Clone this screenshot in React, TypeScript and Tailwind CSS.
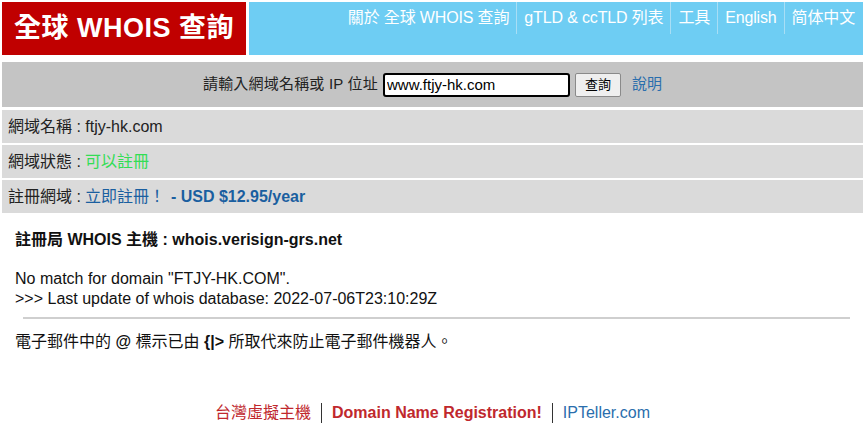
const FONT = { fontFamily: '"Liberation Sans", Arial, "Noto Sans CJK TC", sans-serif' };

const NAV = ["關於 全球 WHOIS 查詢", "gTLD & ccTLD 列表", "工具", "English", "简体中文"];

export default function App() {
  return (
    <div className="min-h-[430px] bg-white px-[2px] pt-[2px] text-[#222]" style={FONT}>
      <header className="flex h-[53px] gap-[3px]">
        <div className="flex w-[244px] items-center justify-center bg-[#c00000]">
          <span className="text-[27px] font-bold tracking-[0.5px] text-white">全球 WHOIS 查詢</span>
        </div>
        <nav className="flex flex-1 items-start justify-end bg-[#6ecdf3] pr-[1px]">
          {NAV.map((item, i) => (
            <span
              key={item}
              className={`flex h-[32px] items-center px-[7px] text-[16px] tracking-[-0.15px] text-white ${
                i > 0 ? "border-l border-[#a8def5]" : ""
              }`}
            >
              {item}
            </span>
          ))}
        </nav>
      </header>

      <form className="mt-[7px] flex h-[45px] items-center justify-center gap-[5px] bg-[#c4c4c4] text-[15px] text-[#222]">
        <label htmlFor="q" className="tracking-[0.2px]">請輸入網域名稱或 IP 位址</label>
        <input
          id="q"
          defaultValue="www.ftjy-hk.com"
          className="h-[24px] w-[187px] rounded-[3px] border-2 border-black bg-white px-[2px] text-[15px] text-black outline-none"
          style={FONT}
        />
        <button
          type="button"
          className="h-[24px] w-[46px] rounded-[2px] border border-[#8a8a8a] bg-[#efefef] text-[13px] text-black"
        >
          查詢
        </button>
        <a href="#" className="ml-[6px] text-[#2a6ead]">說明</a>
      </form>

      <div className="mt-[3px] flex flex-col gap-[2px] text-[16px]">
        <div className="flex h-[33px] items-center bg-[#dadada] px-[6px]">網域名稱 : ftjy-hk.com</div>
        <div className="flex h-[33px] items-center bg-[#dadada] px-[6px]">
          網域狀態 : <span className="ml-[4px] text-[#33dd55]">可以註冊</span>
        </div>
        <div className="flex h-[33px] items-center bg-[#dadada] px-[6px]">
          註冊網域 :
          <a href="#" className="ml-[4px] text-[#1a5fa0]">立即註冊！</a>
          <span className="ml-[6px] font-bold text-[#1a5fa0]">- USD $12.95/year</span>
        </div>
      </div>

      <main className="px-[13px] pt-[15px] text-[16px] text-[#111]">
        <p className="font-bold leading-[24px]">註冊局 WHOIS 主機 : whois.verisign-grs.net</p>
        <p className="mt-[17px] leading-[20px]">
          No match for domain "FTJY-HK.COM".
          <br />
          &gt;&gt;&gt; Last update of whois database: 2022-07-06T23:10:29Z
        </p>
        <hr className="ml-[8px] mr-[0px] mt-[8px] border-t-2 border-[#cfcfcf]" />
        <p className="mt-[11px] leading-[24px]">
          電子郵件中的 <b>@</b> 標示已由 <b>{"{|>"}</b> 所取代來防止電子郵件機器人。
        </p>
      </main>

      <footer className="mt-[47px] flex items-center justify-center text-[16px] leading-[24px]">
        <a href="#" className="text-[#c0282d]">台灣虛擬主機</a>
        <span className="mx-[10px] h-[20px] border-l border-[#333]" />
        <a href="#" className="font-bold text-[#c0282d]">Domain Name Registration!</a>
        <span className="mx-[10px] h-[20px] border-l border-[#333]" />
        <a href="#" className="text-[#2a6ead]">IPTeller.com</a>
      </footer>
    </div>
  );
}
